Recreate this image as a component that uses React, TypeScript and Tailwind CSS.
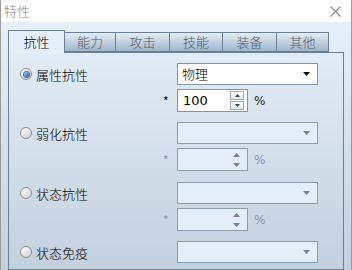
import React from "react";

const font = { fontFamily: '"Noto Sans CJK SC", "Noto Sans", sans-serif' };

const tabs = ["抗性", "能力", "攻击", "技能", "装备", "其他"];
const tabWidths = ["w-[57px]", "w-[52px]", "w-[55px]", "w-[54px]", "w-[55px]", "w-[53px]"];

const Radio = ({ checked }: { checked?: boolean }) => (
  <span className="relative w-[12px] h-[12px] rounded-full border border-[#8d8d8d] bg-gradient-to-br from-[#ffffff] to-[#cfcfcf] flex items-center justify-center shrink-0">
    {checked && (
      <span className="w-[5px] h-[5px] rounded-full bg-gradient-to-br from-[#8fd0ff] to-[#1a5ea8] shadow-[0_0_0_1px_#3b6fa8]" />
    )}
  </span>
);

const Arrow = ({ disabled }: { disabled?: boolean }) => (
  <svg width="7" height="4" viewBox="0 0 7 4">
    <path d="M0 0 H7 L3.5 4 Z" fill={disabled ? "#7d7ba3" : "#111111"} />
  </svg>
);

const Dropdown = ({ value, disabled }: { value?: string; disabled?: boolean }) => (
  <div
    className={`w-[141px] h-[22px] border flex items-center justify-between pl-[4px] pr-[7px] text-[13px] font-light ${
      disabled ? "bg-[#e3eef9] border-[#8d9dae]" : "bg-white border-[#8394a8] text-black"
    }`}
  >
    <span>{value ?? ""}</span>
    <Arrow disabled={disabled} />
  </div>
);

const SpinBtn = ({ up }: { up?: boolean }) => (
  <span className="w-[14px] h-[9px] border border-[#9fadbc] bg-gradient-to-b from-[#fbfdff] to-[#dfe7ef] flex items-center justify-center">
    <svg width="5" height="3" viewBox="0 0 5 3">
      <path d={up ? "M0 3 H5 L2.5 0 Z" : "M0 0 H5 L2.5 3 Z"} fill="#3c4654" />
    </svg>
  </span>
);

const Spinner = ({ value, disabled }: { value?: string; disabled?: boolean }) => (
  <div className="flex items-center">
    <span className={`w-[17px] text-[12px] pl-[3px] ${disabled ? "text-[#8e8db8]" : "text-black"}`}>*</span>
    <div
      className={`w-[71px] h-[23px] border flex items-center justify-between pl-[5px] pr-[3px] ${
        disabled ? "bg-[#e3eef9] border-[#8d9dae]" : "bg-white border-[#8394a8]"
      }`}
    >
      <span className="text-[13px] text-black" style={{ fontFamily: '"DejaVu Sans", sans-serif' }}>
        {value ?? ""}
      </span>
      {disabled ? (
        <span className="flex flex-col items-center gap-[6px] pr-[4px]">
          <svg width="7" height="4" viewBox="0 0 7 4">
            <path d="M0 4 H7 L3.5 0 Z" fill="#7d7ba3" />
          </svg>
          <svg width="7" height="4" viewBox="0 0 7 4">
            <path d="M0 0 H7 L3.5 4 Z" fill="#7d7ba3" />
          </svg>
        </span>
      ) : (
        <span className="flex flex-col gap-[1px]">
          <SpinBtn up />
          <SpinBtn />
        </span>
      )}
    </div>
    <span
      className={`ml-[6px] text-[12px] ${disabled ? "text-[#8e8db8]" : "text-[#222]"}`}
      style={{ fontFamily: '"DejaVu Sans", sans-serif' }}
    >
      %
    </span>
  </div>
);

const Group = ({
  label,
  checked,
  value,
  spin,
  disabled,
  className = "",
}: {
  label: string;
  checked?: boolean;
  value?: string;
  spin?: string | null;
  disabled?: boolean;
  className?: string;
}) => (
  <div className={`flex ${className}`}>
    <div className="w-[151px] h-[22px] pl-[11px] flex items-center gap-[4px]">
      <Radio checked={checked} />
      <span className="text-[13px] text-black leading-none font-light">{label}</span>
    </div>
    <div className="flex flex-col gap-[4px]">
      <div className="pl-[17px]">
        <Dropdown value={value} disabled={disabled} />
      </div>
      {spin !== null && <Spinner value={spin} disabled={disabled} />}
    </div>
  </div>
);

export default function App() {
  return (
    <div
      className="w-[352px] h-[270px] overflow-hidden flex flex-col border-l border-r border-[#9a9a9a] bg-white"
      style={font}
    >
      <div className="h-[22px] bg-white flex items-center justify-between pl-[3px] pr-[10px]">
        <span className="text-[13px] text-[#8a8a8a] font-light">特性</span>
        <svg width="11" height="11" viewBox="0 0 11 11">
          <path d="M0.5 0.5 L10.5 10.5 M10.5 0.5 L0.5 10.5" stroke="#8a8a8a" strokeWidth="1.1" />
        </svg>
      </div>
      <div className="flex-1 flex flex-col pt-[8px] px-[7px] bg-gradient-to-b from-[#e6f0fa] to-[#c3d0dd]">
        <div className="flex items-end h-[22px]">
          {tabs.map((t, i) =>
            i === 0 ? (
              <div
                key={t}
                className={`${tabWidths[i]} h-[23px] -mb-px z-10 border border-b-0 border-[#6b7f99] bg-[#e4eef9] flex items-center justify-center text-[13px] text-black font-light`}
              >
                {t}
              </div>
            ) : (
              <div
                key={t}
                className={`${tabWidths[i]} h-[20px] -ml-px border border-[#6b7f99] bg-gradient-to-b from-[#e4edf5] to-[#9fb6c9] flex items-center justify-center text-[13px] text-[#505a66] font-light`}
              >
                {t}
              </div>
            )
          )}
        </div>
        <div className="flex-1 border border-[#6b7f99] pt-[10px] flex flex-col">
          <Group label="属性抗性" checked value="物理" spin="100" />
          <Group label="弱化抗性" disabled spin="" className="mt-[10px]" />
          <Group label="状态抗性" disabled spin="" className="mt-[11px]" />
          <Group label="状态免疫" disabled spin={null} className="mt-[10px]" />
        </div>
      </div>
    </div>
  );
}
